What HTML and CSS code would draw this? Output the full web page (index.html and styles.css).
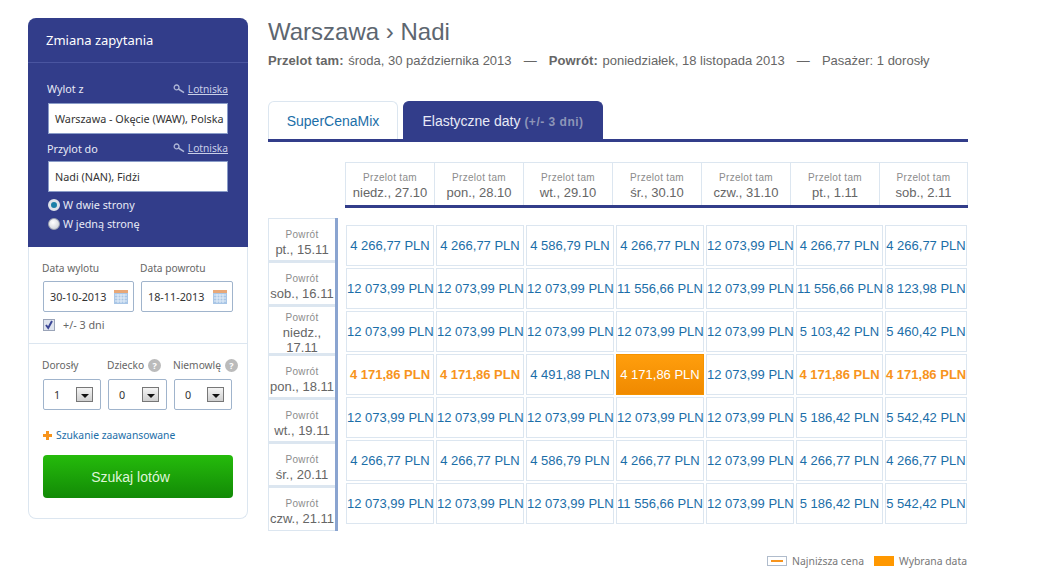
FILE: index.html
```html
<!DOCTYPE html>
<html lang="pl">
<head>
  <meta charset="UTF-8">
  <meta name="viewport" content="width=device-width, initial-scale=1.0">
  <title>Warszawa - Nadi</title>
  <link rel="stylesheet" href="styles.css">
</head>
<body>
  <div class="page">
    <aside class="search">
      <div class="search-top">
        <h2 class="search-title">Zmiana zapytania</h2>
        <div class="route">
          <div class="route-label">
            <span>Wylot z</span>
            <a class="airports" href="#"><svg class="key" width="13" height="10" viewBox="0 0 13 10"><circle cx="3.6" cy="3.4" r="2.4" fill="none" stroke="#aeb6d6" stroke-width="1.3"/><path d="M5.4 5l5.6 3.6" stroke="#aeb6d6" stroke-width="1.6"/></svg><u>Lotniska</u></a>
          </div>
          <div class="route-input">Warszawa - Okęcie (WAW), Polska</div>
          <div class="route-label second">
            <span>Przylot do</span>
            <a class="airports" href="#"><svg class="key" width="13" height="10" viewBox="0 0 13 10"><circle cx="3.6" cy="3.4" r="2.4" fill="none" stroke="#aeb6d6" stroke-width="1.3"/><path d="M5.4 5l5.6 3.6" stroke="#aeb6d6" stroke-width="1.6"/></svg><u>Lotniska</u></a>
          </div>
          <div class="route-input">Nadi (NAN), Fidżi</div>
          <div class="radio-row"><span class="radio radio-on"></span>W dwie strony</div>
          <div class="radio-row"><span class="radio"></span>W jedną stronę</div>
        </div>
      </div>

      <div class="dates">
        <div class="date-col">
          <div class="field-label">Data wylotu</div>
          <div class="date-input">30-10-2013
            <svg class="cal" width="14" height="14" viewBox="0 0 14 14"><rect width="14" height="14" fill="#a9c6e6"/><rect y="0" width="14" height="3" fill="#e8a878"/><path d="M1 5h12M1 8h12M1 11h12M4 4v9M7 4v9M10 4v9" stroke="#e4eef8" stroke-width="1"/></svg>
          </div>
        </div>
        <div class="date-col">
          <div class="field-label">Data powrotu</div>
          <div class="date-input">18-11-2013
            <svg class="cal" width="14" height="14" viewBox="0 0 14 14"><rect width="14" height="14" fill="#a9c6e6"/><rect y="0" width="14" height="3" fill="#e8a878"/><path d="M1 5h12M1 8h12M1 11h12M4 4v9M7 4v9M10 4v9" stroke="#e4eef8" stroke-width="1"/></svg>
          </div>
        </div>
      </div>
      <div class="flex-days">
        <span class="check"><svg width="10" height="10" viewBox="0 0 10 10"><path d="M2 5l2.2 3L8 1" fill="none" stroke="#3c4796" stroke-width="2"/></svg></span>
        +/- 3 dni
      </div>

      <div class="pax">
        <div class="pax-col pax-adult">
          <div class="field-label">Dorosły</div>
          <div class="pax-select">1<span class="arrow"></span></div>
        </div>
        <div class="pax-col pax-child">
          <div class="field-label">Dziecko<span class="help">?</span></div>
          <div class="pax-select">0<span class="arrow"></span></div>
        </div>
        <div class="pax-col pax-infant">
          <div class="field-label">Niemowlę<span class="help">?</span></div>
          <div class="pax-select">0<span class="arrow"></span></div>
        </div>
      </div>

      <a class="advanced" href="#"><span class="plus"></span>Szukanie zaawansowane</a>
      <button class="search-btn">Szukaj lotów</button>
    </aside>

    <main class="results">
      <h1 class="trip-title">Warszawa › Nadi</h1>
      <p class="trip-info">
        <b>Przelot tam:</b> środa, 30 października 2013
        <span class="dash">—</span>
        <b>Powrót:</b> poniedziałek, 18 listopada 2013
        <span class="dash">—</span>
        Pasażer: 1 dorosły
      </p>

      <div class="tabs">
        <a class="tab" href="#">SuperCenaMix</a>
        <a class="tab tab-active" href="#">Elastyczne daty <small>(+/- 3 dni)</small></a>
      </div>

      <div class="out-row">
        <div class="out-day"><span>Przelot tam</span>niedz., 27.10</div>
        <div class="out-day"><span>Przelot tam</span>pon., 28.10</div>
        <div class="out-day"><span>Przelot tam</span>wt., 29.10</div>
        <div class="out-day"><span>Przelot tam</span>śr., 30.10</div>
        <div class="out-day"><span>Przelot tam</span>czw., 31.10</div>
        <div class="out-day"><span>Przelot tam</span>pt., 1.11</div>
        <div class="out-day"><span>Przelot tam</span>sob., 2.11</div>
      </div>

      <div class="matrix">
        <div class="back-days">
          <div class="back-day"><span>Powrót</span>pt., 15.11</div>
          <div class="back-day"><span>Powrót</span>sob., 16.11</div>
          <div class="back-day back-tall"><span>Powrót</span>niedz., 17.11</div>
          <div class="back-day"><span>Powrót</span>pon., 18.11</div>
          <div class="back-day"><span>Powrót</span>wt., 19.11</div>
          <div class="back-day"><span>Powrót</span>śr., 20.11</div>
          <div class="back-day"><span>Powrót</span>czw., 21.11</div>
        </div>
        <div class="prices">
          <a class="price">4 266,77 PLN</a><a class="price">4 266,77 PLN</a><a class="price">4 586,79 PLN</a><a class="price">4 266,77 PLN</a><a class="price">12 073,99 PLN</a><a class="price">4 266,77 PLN</a><a class="price">4 266,77 PLN</a>
          <a class="price">12 073,99 PLN</a><a class="price">12 073,99 PLN</a><a class="price">12 073,99 PLN</a><a class="price">11 556,66 PLN</a><a class="price">12 073,99 PLN</a><a class="price">11 556,66 PLN</a><a class="price">8 123,98 PLN</a>
          <a class="price">12 073,99 PLN</a><a class="price">12 073,99 PLN</a><a class="price">12 073,99 PLN</a><a class="price">12 073,99 PLN</a><a class="price">12 073,99 PLN</a><a class="price">5 103,42 PLN</a><a class="price">5 460,42 PLN</a>
          <a class="price price-low">4 171,86 PLN</a><a class="price price-low">4 171,86 PLN</a><a class="price">4 491,88 PLN</a><a class="price price-picked">4 171,86 PLN</a><a class="price">12 073,99 PLN</a><a class="price price-low">4 171,86 PLN</a><a class="price price-low">4 171,86 PLN</a>
          <a class="price">12 073,99 PLN</a><a class="price">12 073,99 PLN</a><a class="price">12 073,99 PLN</a><a class="price">12 073,99 PLN</a><a class="price">12 073,99 PLN</a><a class="price">5 186,42 PLN</a><a class="price">5 542,42 PLN</a>
          <a class="price">4 266,77 PLN</a><a class="price">4 266,77 PLN</a><a class="price">4 586,79 PLN</a><a class="price">4 266,77 PLN</a><a class="price">12 073,99 PLN</a><a class="price">4 266,77 PLN</a><a class="price">4 266,77 PLN</a>
          <a class="price">12 073,99 PLN</a><a class="price">12 073,99 PLN</a><a class="price">12 073,99 PLN</a><a class="price">11 556,66 PLN</a><a class="price">12 073,99 PLN</a><a class="price">5 186,42 PLN</a><a class="price">5 542,42 PLN</a>
        </div>
      </div>

      <div class="legend">
        <span class="swatch swatch-low"></span>Najniższa cena
        <span class="swatch swatch-picked"></span>Wybrana data
      </div>
    </main>
  </div>
</body>
</html>
```

FILE: styles.css
```css
:root {
  --navy: #323d8a;
  --line: #dce6f0;
  --link: #1b6ea8;
  --orange: #f7941d;
  --text: #666;
  --tahoma: "Noto Sans", "Liberation Sans", sans-serif;
  --arial: "Liberation Sans", Arial, sans-serif;
}

* {
  margin: 0;
  padding: 0;
  box-sizing: border-box;
}

body {
  background: #fff;
  color: var(--text);
  font-family: var(--arial);
}

a {
  text-decoration: none;
  color: inherit;
}

.page {
  display: flex;
  gap: 20px;
  padding: 18px 0 0 28px;
}

/* Search panel */
.search {
  width: 220px;
  height: 501px;
  border: 1px solid var(--line);
  border-top: none;
  border-radius: 8px;
  font-family: var(--tahoma);
  font-size: 10.8px;
}

.search-top {
  margin: 0 -1px;
  height: 229px;
  background: var(--navy);
  border-radius: 8px 8px 0 0;
  color: #fff;
}

.search-title {
  height: 45px;
  padding: 12px 0 0 18px;
  font-size: 13px;
  font-weight: 400;
  line-height: 20px;
  border-bottom: 1px solid #4a55a0;
}

.route {
  padding: 18px 20px 0;
}

.route-label {
  display: flex;
  justify-content: space-between;
  height: 22px;
  line-height: 16px;
  color: #e8eaf6;
}

.route-label > span {
  margin-left: -1px;
}

.route-label.second {
  height: 20px;
  margin-top: 7px;
  line-height: 15px;
}

.airports {
  color: #c9cfe8;
  font-size: 10.2px;
}

.key {
  margin-right: 2px;
  vertical-align: -1px;
}

.route-input {
  height: 31px;
  padding-left: 6px;
  background: #fff;
  border: 1px solid #8a9cc8;
  color: #333;
  line-height: 29px;
  white-space: nowrap;
  overflow: hidden;
}

.radio-row {
  display: flex;
  align-items: center;
  gap: 3px;
  height: 17px;
  margin-top: 2px;
  color: #e8eaf6;
}

.route-input + .radio-row {
  margin-top: 4px;
}

.radio {
  width: 12px;
  height: 12px;
  border-radius: 50%;
  border: 1px solid #9aa0b0;
  background: radial-gradient(circle at 40% 35%, #fff, #c4c8d0);
}

.radio-on {
  border: 3px solid #dfe3ea;
  background: #1a7fa8;
}

.dates {
  display: flex;
  gap: 7px;
  padding: 13px 0 0 14px;
}

.date-col {
  width: 91px;
}

.date-col + .date-col {
  width: 92px;
}

.field-label {
  height: 22px;
  margin-left: -1px;
  font-size: 10.2px;
  line-height: 16px;
  white-space: nowrap;
}

.date-input {
  display: flex;
  align-items: center;
  justify-content: space-between;
  height: 31px;
  margin-top: -1px;
  padding: 0 5px 0 6px;
  border: 1px solid #a0b4cc;
  border-radius: 2px;
  color: #333;
}

.flex-days {
  display: flex;
  align-items: center;
  gap: 8px;
  height: 26px;
  margin-top: 6px;
  padding: 0 0 12px 14px;
  border-bottom: 1px solid var(--line);
}

.check {
  display: flex;
  align-items: center;
  justify-content: center;
  width: 12px;
  height: 12px;
  background: #dfe4ee;
  border: 1px solid #9aa4b8;
}

.pax {
  display: flex;
  padding: 13px 0 0 14px;
}

.pax-col {
  width: 58px;
}

.pax-child {
  width: 59px;
  margin-left: 7px;
}

.pax-infant {
  width: 58px;
  margin-left: 7px;
}

.help {
  display: inline-block;
  width: 13px;
  height: 13px;
  margin-left: 4px;
  border-radius: 50%;
  background: #bbb;
  color: #fff;
  font-size: 9px;
  font-weight: 700;
  line-height: 13px;
  text-align: center;
}

.pax-select {
  display: flex;
  align-items: center;
  justify-content: space-between;
  height: 31px;
  padding: 0 7px 0 10px;
  border: 1px solid #a0b4cc;
  border-radius: 2px;
  color: #333;
}

.arrow {
  position: relative;
  width: 17px;
  height: 15px;
  border: 1px solid #777;
  background: linear-gradient(#f4f4f4, #cfcfcf);
}

.arrow::after {
  content: "";
  position: absolute;
  left: 4px;
  top: 6px;
  border: 4px solid transparent;
  border-top: 4px solid #111;
  border-bottom: none;
}

.advanced {
  display: flex;
  align-items: center;
  gap: 4px;
  height: 16px;
  margin: 17px 0 0 14px;
  color: var(--link);
  font-size: 10.3px;
}

.plus {
  width: 9px;
  height: 9px;
  background:
    linear-gradient(var(--orange), var(--orange)) center / 100% 3px no-repeat,
    linear-gradient(var(--orange), var(--orange)) center / 3px 100% no-repeat;
}

.search-btn {
  display: block;
  width: 190px;
  height: 43px;
  margin: 12px 0 0 14px;
  padding-right: 15px;
  border: none;
  border-radius: 4px;
  background: linear-gradient(#25bb0b, #128a06);
  color: #dff5d8;
  font-family: var(--arial);
  font-size: 14px;
}

/* Results */
.results {
  width: 700px;
}

.trip-title {
  height: 28px;
  font-size: 24px;
  font-weight: 400;
  line-height: 28px;
  color: #5d6670;
}

.trip-info {
  margin-top: 7px;
  font-size: 13px;
  line-height: 16px;
  white-space: nowrap;
}

.trip-info b {
  margin-right: 1px;
  letter-spacing: .1px;
}

.dash {
  margin: 0 8.5px;
}

.tabs {
  display: flex;
  gap: 5px;
  height: 41px;
  margin-top: 32px;
  border-bottom: 3px solid var(--navy);
}

.tab {
  width: 130px;
  height: 38px;
  border: 1px solid var(--line);
  border-bottom: none;
  border-radius: 6px 6px 0 0;
  color: var(--link);
  font-size: 14px;
  line-height: 38px;
  text-align: center;
}

.tab-active {
  width: 200px;
  background: var(--navy);
  border-color: var(--navy);
  color: #e8eaf6;
}

.tab-active small {
  color: #8d95b8;
  font-size: 12px;
  font-weight: 700;
  letter-spacing: .5px;
}

.out-row {
  display: flex;
  height: 46px;
  margin: 20px 0 0 77px;
  border-bottom: 3px solid var(--navy);
}

.out-day,
.back-day {
  font-size: 13px;
  text-align: center;
}

.out-day {
  width: 89px;
  height: 43px;
  padding-top: 7px;
  border: 1px solid var(--line);
  border-bottom: none;
  border-right-width: 0;
  line-height: 15px;
}

.out-day:last-child {
  border-right-width: 1px;
}

.out-day span,
.back-day span {
  display: block;
  color: #8c8c8c;
  font-size: 10px;
  letter-spacing: .3px;
}

.matrix {
  display: flex;
  align-items: flex-start;
  margin-top: 10px;
}

.back-days {
  width: 70px;
  border-right: 3px solid #8aa4d0;
}

.back-day {
  height: 44px;
  padding-top: 8px;
  border: 1px solid var(--line);
  border-right: none;
  border-bottom-width: 2px;
  line-height: 15px;
}

.back-day:last-child {
  border-bottom-width: 1px;
}

.back-tall {
  height: 49px;
  padding: 3px 8px 0;
}

.prices {
  display: grid;
  grid-template-columns: 88px 88px 88px 88px 88px 87px 82px;
  grid-auto-rows: 41px;
  gap: 2px;
  margin: 7px 0 0 8px;
}

.price {
  border: 1px solid var(--line);
  color: var(--link);
  font-size: 13px;
  line-height: 39px;
  text-align: center;
  white-space: nowrap;
}

.price-low {
  color: var(--orange);
  font-weight: 700;
}

.price-picked {
  background: linear-gradient(#ff9e0d, #f08a00);
  border-color: #f59300;
  color: #fff;
}

.legend {
  display: flex;
  align-items: center;
  justify-content: flex-end;
  height: 14px;
  margin-top: 23px;
  padding-right: 1px;
  font-family: var(--tahoma);
  font-size: 10.4px;
  color: #777;
}

.swatch {
  width: 20px;
  height: 10px;
  margin-right: 5px;
}

.swatch-low {
  border: 1px solid #b0bccc;
  background: linear-gradient(var(--orange), var(--orange)) center / 12px 2px no-repeat;
}

.swatch-picked {
  margin-left: 10px;
  background: #ff9800;
}
```
